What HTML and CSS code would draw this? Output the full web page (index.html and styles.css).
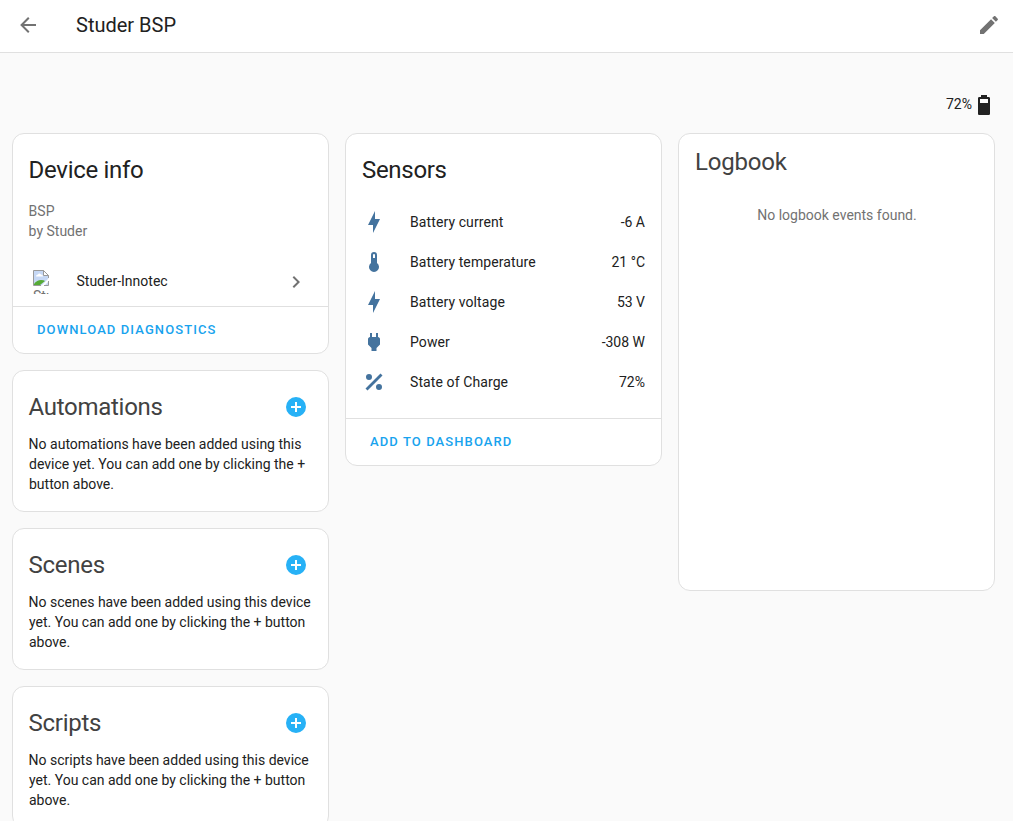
FILE: index.html
```html
<!DOCTYPE html>
<html lang="en">
<head>
<meta charset="utf-8">
<title>Studer BSP</title>
<link rel="stylesheet" href="styles.css">
</head>
<body>
<header class="toolbar">
  <svg class="icon" viewBox="0 0 24 24"><path d="M20,11V13H8L13.5,18.5L12.08,19.92L4.16,12L12.08,4.08L13.5,5.5L8,11H20Z"/></svg>
  <h1 class="toolbar-title">Studer BSP</h1>
  <svg class="icon" viewBox="0 0 24 24"><path d="M20.71,7.04C21.1,6.65 21.1,6 20.71,5.63L18.37,3.29C18,2.9 17.35,2.9 16.96,3.29L15.12,5.12L18.87,8.87M3,17.25V21H6.75L17.81,9.93L14.06,6.18L3,17.25Z"/></svg>
</header>
<main class="page">
  <div class="battery"><span>72%</span><svg class="icon" viewBox="0 0 24 24"><path d="M16,10H8V6H16M16.67,4H15V2H9V4H7.33A1.33,1.33 0 0,0 6,5.33V20.67C6,21.4 6.6,22 7.33,22H16.67A1.33,1.33 0 0,0 18,20.67V5.33C18,4.6 17.4,4 16.67,4Z"/></svg></div>
  <div class="columns">
    <div class="column">
      <section class="card device">
        <h2 class="card-title">Device info</h2>
        <div class="model"><div>BSP</div><div>by Studer</div></div>
        <div class="integration">
          <div class="logo">
            <svg class="missing" width="16" height="16" viewBox="0 0 16 16">
              <path fill="#c6d8f5" d="M.5 .5h10l5 5v10H.5z"/>
              <path fill="#fff" d="M3 6.500q0-2 2-2 1-2 3 0 2 0 2 2z"/>
              <path fill="#56ab36" d="M1 15v-1q3-4 7-4 3 0 4 1l-5 4z"/>
              <path fill="#fff" d="M8 16l8-8v3l-5 5z"/>
              <path fill="#fff" stroke="#9a9a9a" d="M10.500 .5v5h5z"/>
              <path fill="none" stroke="#9a9a9a" d="M8 15.500H.5V.5h10l5 5V8M15.500 11v4.500H11"/>
            </svg>
            <span class="logo-alt">Studer-Innotec</span>
          </div>
          <span class="integration-name">Studer-Innotec</span>
          <svg class="icon" viewBox="0 0 24 24"><path d="M8.59,16.58L13.17,12L8.59,7.41L10,6L16,12L10,18L8.59,16.58Z"/></svg>
        </div>
        <div class="actions">Download diagnostics</div>
      </section>
      <section class="card related">
        <div class="related-head"><h2>Automations</h2><svg class="icon add" viewBox="0 0 24 24"><path d="M17,13H13V17H11V13H7V11H11V7H13V11H17M12,2A10,10 0 0,0 2,12A10,10 0 0,0 12,22A10,10 0 0,0 22,12A10,10 0 0,0 12,2Z"/></svg></div>
        <p>No automations have been added using this device yet. You can add one by clicking the + button above.</p>
      </section>
      <section class="card related">
        <div class="related-head"><h2>Scenes</h2><svg class="icon add" viewBox="0 0 24 24"><path d="M17,13H13V17H11V13H7V11H11V7H13V11H17M12,2A10,10 0 0,0 2,12A10,10 0 0,0 12,22A10,10 0 0,0 22,12A10,10 0 0,0 12,2Z"/></svg></div>
        <p>No scenes have been added using this device yet. You can add one by clicking the + button above.</p>
      </section>
      <section class="card related">
        <div class="related-head"><h2>Scripts</h2><svg class="icon add" viewBox="0 0 24 24"><path d="M17,13H13V17H11V13H7V11H11V7H13V11H17M12,2A10,10 0 0,0 2,12A10,10 0 0,0 12,22A10,10 0 0,0 22,12A10,10 0 0,0 12,2Z"/></svg></div>
        <p>No scripts have been added using this device yet. You can add one by clicking the + button above.</p>
      </section>
    </div>
    <div class="column">
      <section class="card">
        <h2 class="card-title">Sensors</h2>
        <div class="sensors">
          <div class="sensor"><svg class="icon" viewBox="0 0 24 24"><path d="M11 15H6L13 1V9H18L11 23V15Z"/></svg><span class="name">Battery current</span><span>-6 A</span></div>
          <div class="sensor"><svg class="icon" viewBox="0 0 24 24"><path d="M15 13V5A3 3 0 0 0 9 5V13A5 5 0 1 0 15 13M12 4A1 1 0 0 1 13 5V8H11V5A1 1 0 0 1 12 4Z"/></svg><span class="name">Battery temperature</span><span>21 °C</span></div>
          <div class="sensor"><svg class="icon" viewBox="0 0 24 24"><path d="M11 15H6L13 1V9H18L11 23V15Z"/></svg><span class="name">Battery voltage</span><span>53 V</span></div>
          <div class="sensor"><svg class="icon" viewBox="0 0 24 24"><path d="M16,7V3H14V7H10V3H8V7H8C7,7 6,8 6,9V14.5L9.5,18V21H14.5V18L18,14.5V9C18,8 17,7 16,7Z"/></svg><span class="name">Power</span><span>-308 W</span></div>
          <div class="sensor"><svg class="icon" viewBox="0 0 24 24"><path d="M18.5,3.5L3.5,18.5L5.5,20.5L20.5,5.5M7,4A3,3 0 0,0 4,7A3,3 0 0,0 7,10A3,3 0 0,0 10,7A3,3 0 0,0 7,4M17,14A3,3 0 0,0 14,17A3,3 0 0,0 17,20A3,3 0 0,0 20,17A3,3 0 0,0 17,14Z"/></svg><span class="name">State of Charge</span><span>72%</span></div>
        </div>
        <div class="actions">Add to dashboard</div>
      </section>
    </div>
    <div class="column">
      <section class="card logbook">
        <h2>Logbook</h2>
        <p>No logbook events found.</p>
      </section>
    </div>
  </div>
</main>
</body>
</html>
```

FILE: styles.css
```css
* { box-sizing: border-box; }
html { overflow: hidden; }
body {
  margin: 0;
  height: 821px;
  overflow: hidden;
  background: #fafafa;
  color: #212121;
  font: 14px/20px Roboto, sans-serif;
}
h1, h2, p { margin: 0; font-weight: 400; }
.icon { display: block; flex: none; width: 24px; height: 24px; fill: currentColor; }
.toolbar {
  display: flex;
  align-items: center;
  height: 53px;
  padding: 0 12px 2px 16px;
  background: #fff;
  border-bottom: 1px solid #e0e0e0;
}
.toolbar .icon { color: #727272; }
.toolbar-title { flex: 1; margin-left: 36px; font-size: 20px; line-height: 24px; }
.page { padding: 40px 18px 0 12px; }
.battery { display: flex; justify-content: flex-end; align-items: center; height: 24px; margin: 0 -1px 16px 0; }
.battery span { padding-bottom: 2px; }
.columns { display: grid; grid-template-columns: repeat(3, 317px); gap: 16px; align-items: start; }
.column { display: flex; flex-direction: column; gap: 16px; }
.card { background: #fff; border: 1px solid #e0e0e0; border-radius: 12px; }
.card-title { padding: 12px 16px 16px; font-size: 24px; line-height: 48px; letter-spacing: -0.31px; }
.device .card-title { padding-bottom: 7px; }
.device .card-title, .model, .related h2, .related p { text-indent: -0.4px; }
.model { padding: 0 16px; color: #727272; }
.integration { display: flex; align-items: center; height: 48px; margin-top: 17px; padding: 0 20px; }
.logo { width: 24px; height: 24px; overflow: hidden; }
.missing { display: block; }
.logo-alt { display: block; width: 16px; height: 8px; margin-top: 1px; overflow: hidden; line-height: 19px; color: #727272; }
.integration-name { flex: 1; margin-left: 19.500px; padding-bottom: 2px; }
.integration .icon { color: #727272; }
.actions {
  height: 47px;
  padding: 0 24px;
  border-top: 1px solid #e0e0e0;
  color: #18a3ee;
  font-size: 13px;
  font-weight: 500;
  line-height: 46px;
  letter-spacing: 1.1px;
  text-transform: uppercase;
}
.related { height: 142px; padding: 12px 16px 0; }
.related-head { display: flex; justify-content: space-between; align-items: center; height: 48px; padding-right: 4px; }
.related h2, .logbook h2 { font-size: 24px; line-height: 32px; letter-spacing: -0.29px; color: #424242; }
.add { color: #27b1f6; }
.related p { margin-top: 3px; }
.sensors { padding: 0 16px 16px; margin-top: -8px; }
.sensor { display: flex; align-items: center; height: 40px; }
.sensor .icon { color: #44739e; }
.sensor .name { flex: 1; margin-left: 24px; letter-spacing: 0.1px; }
.logbook { height: 458px; padding: 12px 16px; }
.logbook h2 { letter-spacing: -0.2px; }
.logbook p { margin-top: 27px; text-align: center; text-indent: 1px; color: #727272; }
```
